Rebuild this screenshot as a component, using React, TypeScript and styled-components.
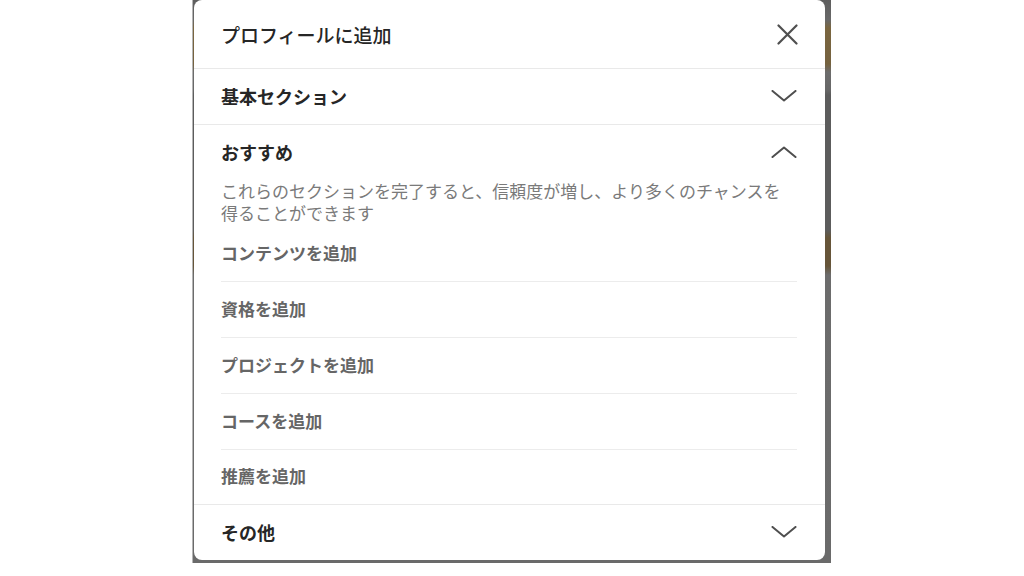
import React from "react";
import styled, { createGlobalStyle } from "styled-components";

const GlobalStyle = createGlobalStyle`
  html, body {
    margin: 0;
    padding: 0;
    background: #ffffff;
    font-family: "Noto Sans CJK JP", "Noto Sans", sans-serif;
  }
  * { box-sizing: border-box; }
`;

const Stage = styled.div`
  width: 1024px;
  height: 576px;
  display: flex;
  align-items: flex-start;
  padding-left: 192px;
  overflow: hidden;
`;

const Backdrop = styled.div`
  width: 639px;
  height: 563px;
  display: flex;
  padding: 0 6px 3px 1px;
  border-left: 1px solid #b5b5b5;
  background: linear-gradient(
    to bottom,
    #5e5e5e 0px,
    #686868 20px,
    #7a6640 28px,
    #75623f 64px,
    #6c6c6c 72px,
    #676767 90px,
    #5c5c5c 95px,
    #5c5c5c 230px,
    #665539 238px,
    #665539 266px,
    #6c6c6c 275px,
    #6a6a6a 563px
  );
`;

const Modal = styled.div`
  flex: 1;
  background: #ffffff;
  border-radius: 8px;
  display: flex;
  flex-direction: column;
  overflow: hidden;
`;

const Header = styled.div`
  height: 70px;
  padding: 0 27px 0 27px;
  display: flex;
  align-items: center;
  justify-content: space-between;
  border-bottom: 1px solid #e9e9e9;
`;

const Title = styled.h2`
  margin: 0;
  font-size: 19px;
  font-weight: 500;
  color: #262626;
`;

const IconButton = styled.button`
  width: 26px;
  height: 26px;
  padding: 0;
  margin-right: -2px;
  border: none;
  background: transparent;
  display: flex;
  align-items: center;
  justify-content: center;
  color: #4f4f4f;
`;

const Section = styled.div<{ $last?: boolean }>`
  display: flex;
  flex-direction: column;
  padding: 0 28px 0 27px;
  border-bottom: ${(p) => (p.$last ? "none" : "1px solid #e9e9e9")};
`;

const SectionHeader = styled.div`
  height: 55px;
  padding-bottom: 2px;
  display: flex;
  align-items: center;
  justify-content: space-between;
`;

const SectionTitle = styled.span`
  font-size: 18px;
  font-weight: 700;
  color: #262626;
`;

const Description = styled.p`
  margin: 0 0 2px;
  font-size: 17px;
  line-height: 22px;
  color: #7a7a7a;
  font-weight: 400;
`;

const ItemList = styled.div`
  display: flex;
  flex-direction: column;
`;

const Item = styled.div<{ $last?: boolean }>`
  height: ${(p) => (p.$last ? "54px" : "56px")};
  display: flex;
  align-items: center;
  padding-bottom: 3px;
  font-size: 17px;
  font-weight: 700;
  color: #666666;
  border-bottom: ${(p) => (p.$last ? "none" : "1px solid #ececec")};
`;

const Chevron = ({ up }: { up?: boolean }) => (
  <svg width="26" height="12" viewBox="0 0 26 12" fill="none">
    <polyline
      points={up ? "1.5,11 13,1.5 24.5,11" : "1.5,1 13,10.5 24.5,1"}
      stroke="#4f4f4f"
      strokeWidth="2"
      strokeLinecap="round"
      strokeLinejoin="round"
    />
  </svg>
);

const CloseIcon = () => (
  <svg width="21" height="21" viewBox="0 0 21 21" fill="none">
    <path d="M1.5 1.5 L19.5 19.5 M19.5 1.5 L1.5 19.5" stroke="#4f4f4f" strokeWidth="2.2" strokeLinecap="round" />
  </svg>
);

const ChevronWrap = styled.span`
  display: flex;
  align-items: center;
`;

const items = ["コンテンツを追加", "資格を追加", "プロジェクトを追加", "コースを追加", "推薦を追加"];

export default function App() {
  return (
    <>
      <GlobalStyle />
      <Stage>
        <Backdrop>
          <Modal>
            <Header>
              <Title>プロフィールに追加</Title>
              <IconButton aria-label="閉じる">
                <CloseIcon />
              </IconButton>
            </Header>
            <Section>
              <SectionHeader>
                <SectionTitle>基本セクション</SectionTitle>
                <ChevronWrap>
                  <Chevron />
                </ChevronWrap>
              </SectionHeader>
            </Section>
            <Section>
              <SectionHeader>
                <SectionTitle>おすすめ</SectionTitle>
                <ChevronWrap>
                  <Chevron up />
                </ChevronWrap>
              </SectionHeader>
              <Description>
                これらのセクションを完了すると、信頼度が増し、より多くのチャンスを得ることができます
              </Description>
              <ItemList>
                {items.map((t, i) => (
                  <Item key={t} $last={i === items.length - 1}>
                    {t}
                  </Item>
                ))}
              </ItemList>
            </Section>
            <Section $last>
              <SectionHeader>
                <SectionTitle>その他</SectionTitle>
                <ChevronWrap>
                  <Chevron />
                </ChevronWrap>
              </SectionHeader>
            </Section>
          </Modal>
        </Backdrop>
      </Stage>
    </>
  );
}
